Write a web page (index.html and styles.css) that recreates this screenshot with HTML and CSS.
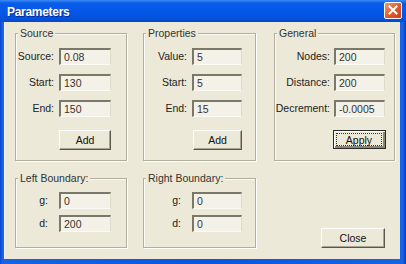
FILE: index.html
```html
<!DOCTYPE html>
<html lang="en">
<head>
<meta charset="UTF-8">
<title>Parameters</title>
<link rel="stylesheet" href="styles.css">
</head>
<body>

<div class="window">
  <div class="titlebar">
    <span class="title">Parameters</span>
    <button class="close-btn" aria-label="Close">
      <svg width="10" height="10" viewBox="0 0 10 10">
        <path d="M1.5 1.5 L8.5 8.5 M8.5 1.5 L1.5 8.5" stroke="#fff" stroke-width="2" stroke-linecap="square"/>
      </svg>
    </button>
  </div>

  <div class="client">
    <div class="group group-source">
      <span class="legend">Source</span>
      <div class="fields">
        <label>Source:</label><input type="text" value="0.08">
        <label>Start:</label><input type="text" value="130">
        <label>End:</label><input type="text" value="150">
        <button class="btn btn-add">Add</button>
      </div>
    </div>

    <div class="group group-props">
      <span class="legend">Properties</span>
      <div class="fields">
        <label>Value:</label><input type="text" value="5">
        <label>Start:</label><input type="text" value="5">
        <label>End:</label><input type="text" value="15">
        <button class="btn btn-add">Add</button>
      </div>
    </div>

    <div class="group group-general">
      <span class="legend">General</span>
      <div class="fields">
        <label>Nodes:</label><input type="text" value="200">
        <label>Distance:</label><input type="text" value="200">
        <label>Decrement:</label><input type="text" value="-0.0005">
        <button class="btn btn-add btn-default"><span>Apply</span></button>
      </div>
    </div>

    <div class="group group-left">
      <span class="legend">Left Boundary:</span>
      <div class="fields">
        <label>g:</label><input type="text" value="0">
        <label>d:</label><input type="text" value="200">
      </div>
    </div>

    <div class="group group-right">
      <span class="legend">Right Boundary:</span>
      <div class="fields">
        <label>g:</label><input type="text" value="0">
        <label>d:</label><input type="text" value="0">
      </div>
    </div>

    <div class="actions">
      <button class="btn btn-close">Close</button>
    </div>
  </div>
</div>

</body>
</html>
```

FILE: styles.css
```css
body {
  margin: 0;
  padding: 0;
  background: #ffffff;
  font-family: "Liberation Sans", Arial, sans-serif;
  font-size: 10.5px;
  color: #000;
}
.window {
  width: 406px;
  height: 264px;
  display: flex;
  flex-direction: column;
  background: linear-gradient(90deg, #0842c8 0, #1662e8 2px, #0a56e0 50%, #1662e8 403px, #0738b0 100%);
}
.titlebar {
  height: 22px;
  display: flex;
  align-items: center;
  justify-content: space-between;
  padding: 0 4px 0 7px;
  background: linear-gradient(#3d8cf8 0, #0a5ce6 3px, #0558ea 45%, #0452dc 85%, #0448c8 100%);
}
.title {
  color: #fff;
  font-weight: bold;
  font-size: 12px;
  letter-spacing: -0.3px;
  text-shadow: 1px 1px 0 #0a2a8a;
  margin-top: 1px;
}
.close-btn {
  width: 18px;
  height: 17px;
  margin-top: -2px;
  padding: 0;
  display: flex;
  align-items: center;
  justify-content: center;
  border: 1px solid #fff;
  border-radius: 2px;
  background: linear-gradient(135deg, #f29a6e 0, #e2582c 55%, #c8401a 100%);
}
.client {
  flex: 1;
  margin: 0 6px 5px 4px;
  padding: 11px 0 0 11px;
  background: #ece9d8;
  box-shadow: inset 1px 0 0 #f7f5ec;
  display: grid;
  grid-template-columns: 112px 113px 123px;
  grid-template-rows: 128px 70px;
  column-gap: 16px;
  row-gap: 17px;
  align-content: start;
}
.group {
  position: relative;
  border: 1px solid #b2ae9f;
  box-shadow: 1px 1px 0 #fff, inset 1px 1px 0 #fbfaf4;
}
.group-general {
  margin-left: 2px;
}
.legend {
  position: absolute;
  top: -7px;
  left: 2px;
  padding: 0 2px;
  background: #ece9d8;
  line-height: 12px;
  color: #333;
}
.fields {
  display: grid;
  align-items: center;
  column-gap: 5px;
  row-gap: 9px;
  padding-top: 14px;
}
.fields label {
  text-align: right;
  line-height: 17px;
  color: #222;
}
.group-source .fields {
  grid-template-columns: 38px 52px;
}
.group-props .fields {
  grid-template-columns: 43px 50px;
}
.group-general .fields {
  grid-template-columns: 55px 51px;
  column-gap: 4px;
}
.group-left .fields {
  grid-template-columns: 38px 52px;
  row-gap: 6px;
  padding-top: 13px;
}
.group-right .fields {
  grid-template-columns: 43px 50px;
  row-gap: 6px;
  padding-top: 13px;
}
.group-left label,
.group-right label {
  padding-right: 6px;
}
input {
  box-sizing: border-box;
  height: 17px;
  width: 100%;
  margin: 0;
  padding: 0 0 0 3px;
  font-family: inherit;
  font-size: 10.5px;
  color: #333;
  background: #f3f1e8;
  border: 0;
  border-top: 2px solid #7a7868;
  border-left: 2px solid #7a7868;
  border-right: 1px solid #dedbcb;
  border-bottom: 1px solid #fbfaf4;
  outline: none;
}
.btn {
  box-sizing: border-box;
  height: 20px;
  padding: 0;
  font-family: inherit;
  font-size: 10.5px;
  color: #111;
  background: #ece9d8;
  border: 1px solid;
  border-color: #fff #5a584c #5a584c #fff;
  box-shadow: inset -1px -1px 0 #a8a595;
}
.btn-add {
  grid-column: 2;
  margin-top: 4px;
}
.group-props .btn-add {
  margin-left: 1px;
}
.btn-default {
  height: 19px;
  margin-left: -1px;
  width: 53px;
  border: 1px solid #2a2a2a;
  box-shadow: inset 1px 1px 0 #fff, inset -2px -2px 0 #8a8778;
  padding: 2px 3px 3px 2px;
}
.btn-default span {
  display: flex;
  align-items: center;
  justify-content: center;
  box-sizing: border-box;
  height: 13px;
  border: 1px dotted #333;
}
.actions {
  display: flex;
  justify-content: flex-end;
  align-items: flex-end;
  margin-left: 2px;
  padding-right: 10px;
}
.btn-close {
  width: 64px;
}
```
